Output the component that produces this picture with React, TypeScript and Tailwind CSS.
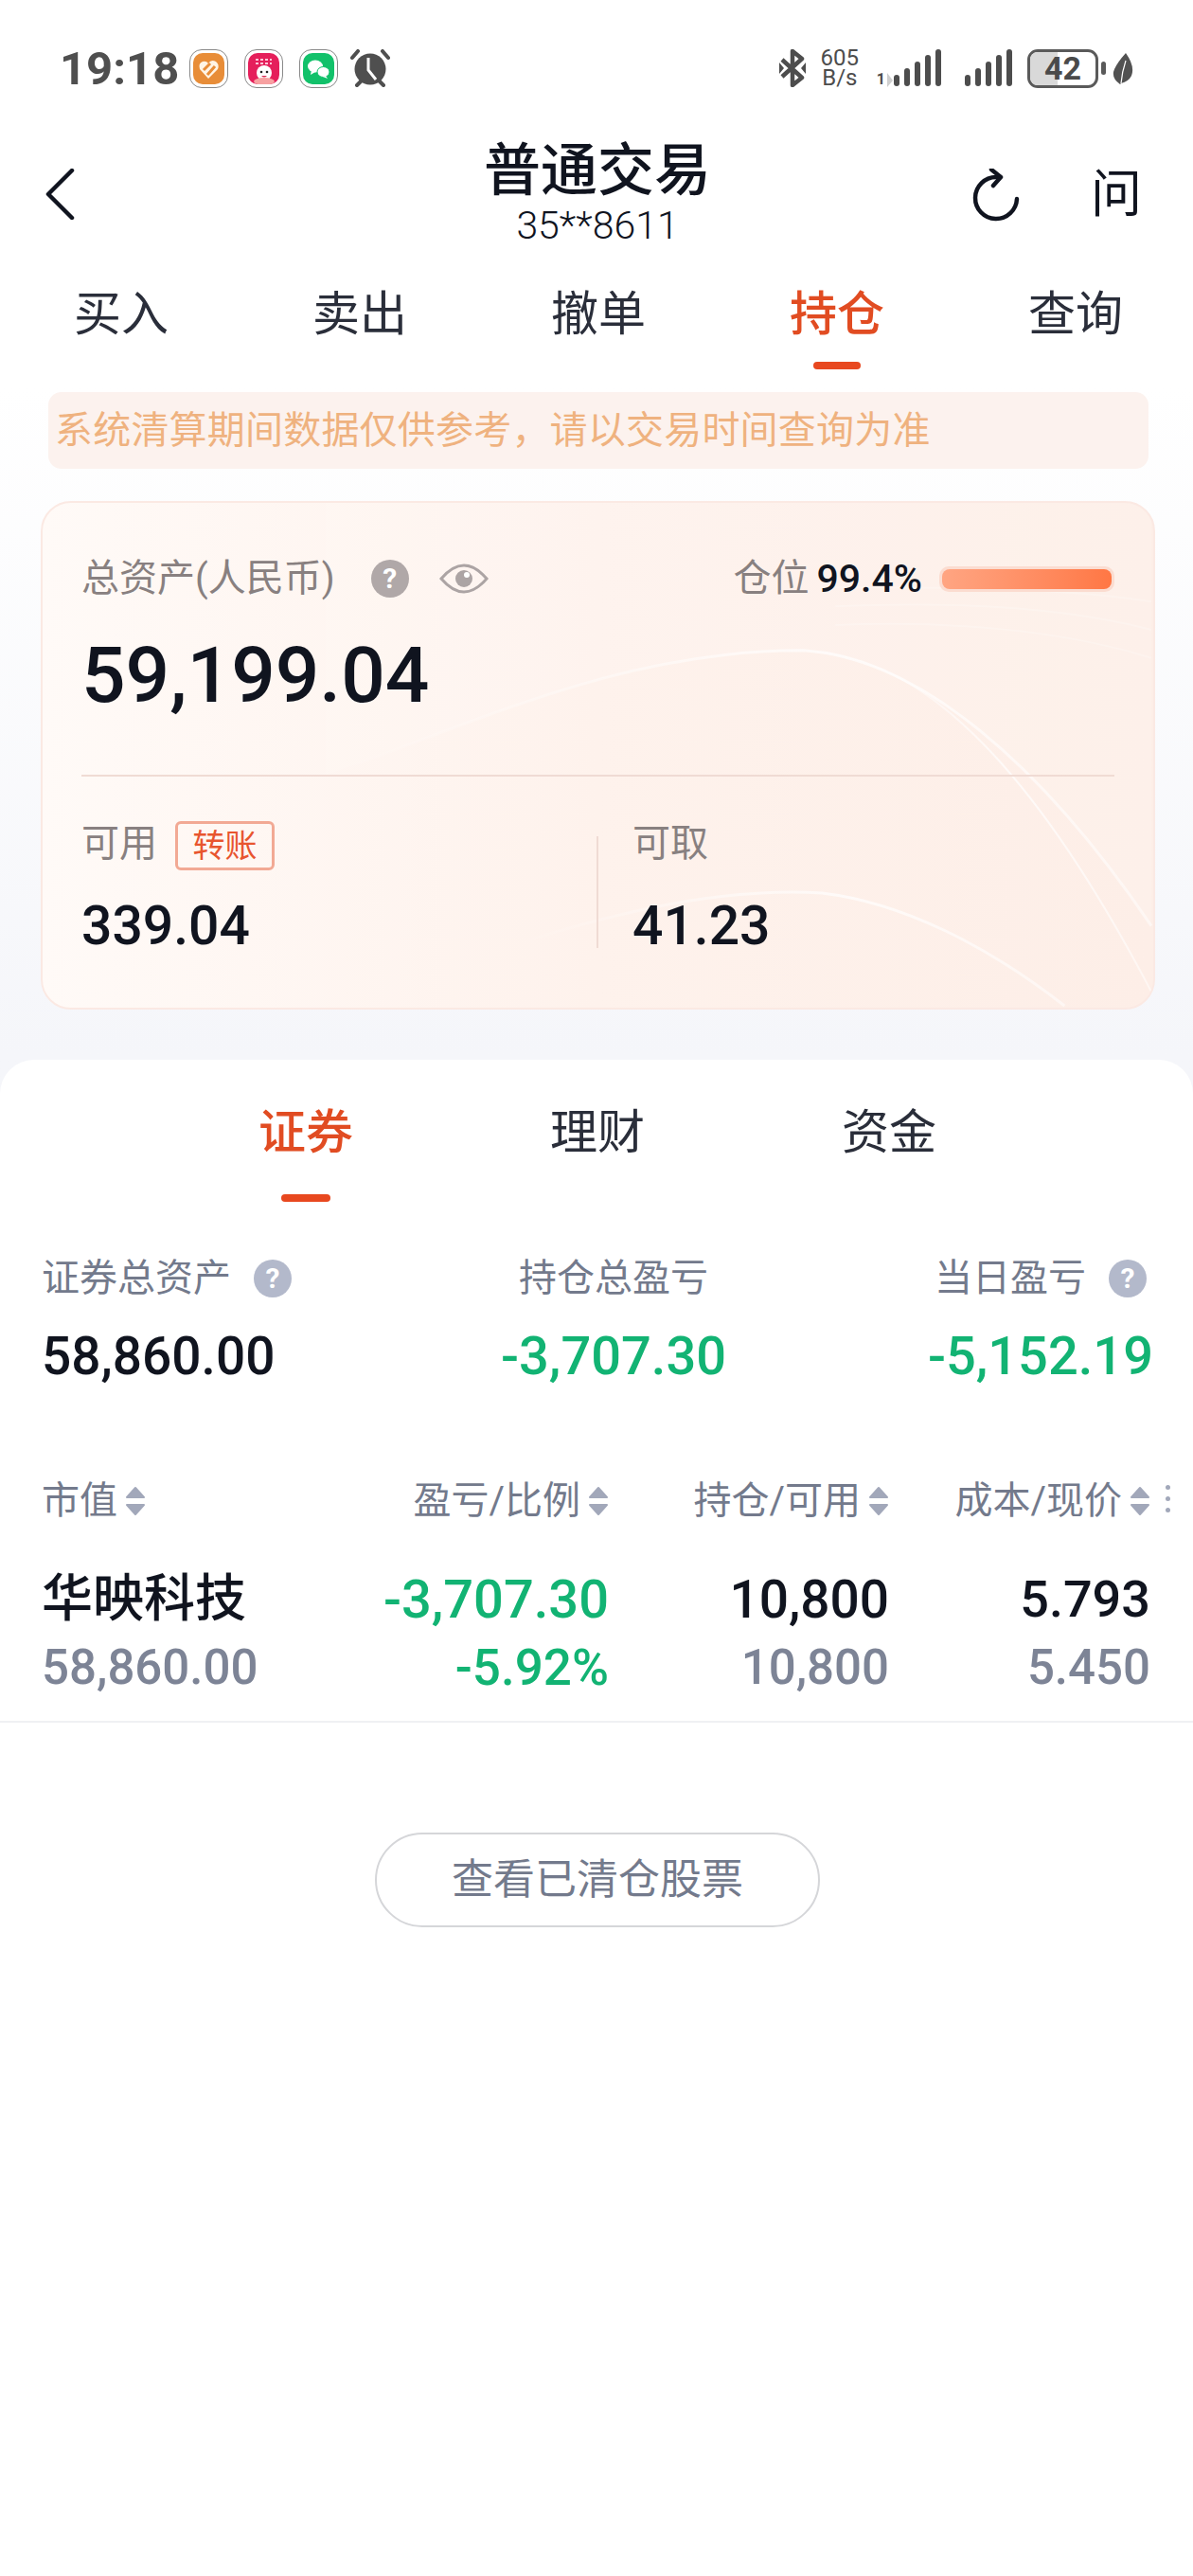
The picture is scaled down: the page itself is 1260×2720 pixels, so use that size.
import React from 'react';

const topTabs = ['买入', '卖出', '撤单', '持仓', '查询'];
const subTabs = ['证券', '理财', '资金'];

const HelpDot = ({ className }: { className: string }) => (
    <span className={`flex h-[40px] w-[40px] shrink-0 items-center justify-center rounded-full text-[30px] font-bold leading-none text-white ${className}`}>?</span>
);

const SortIcon = () => (
    <svg width="22" height="32" viewBox="0 0 22 32" className="shrink-0">
        <path d="M11 2 L20 12 H2 Z" fill="#a2a8ba" stroke="#a2a8ba" strokeWidth="2" strokeLinejoin="round" />
        <path d="M11 30 L20 20 H2 Z" fill="#a2a8ba" stroke="#a2a8ba" strokeWidth="2" strokeLinejoin="round" />
    </svg>
);

const Signal = () => (
    <svg width="50" height="40" viewBox="0 0 50 40">
        <rect x="0" y="27" width="6" height="12" rx="3" fill="#4d4d4d" />
        <rect x="11" y="20" width="6" height="19" rx="3" fill="#4d4d4d" />
        <rect x="22" y="13" width="6" height="26" rx="3" fill="#4d4d4d" />
        <rect x="33" y="6" width="6" height="33" rx="3" fill="#4d4d4d" />
        <rect x="44" y="0" width="6" height="39" rx="3" fill="#4d4d4d" />
    </svg>
);

const AppIcon = ({ children }: { children: React.ReactNode }) => (
    <div className="flex h-[41px] w-[41px] items-center justify-center rounded-[13px] border border-[#8a8a8a]">
        <div className="h-[33px] w-[33px] overflow-hidden rounded-[10px]">{children}</div>
    </div>
);

const StatusBar = () => (
    <div className="flex h-[144px] items-center pl-[63px] pr-[63px]">
        <span className="w-[137px] text-[49px] font-bold leading-none text-[#4f4f4f]">19:18</span>
        <div className="flex items-center gap-[17px]">
            <AppIcon>
                <svg viewBox="0 0 33 33" className="h-full w-full">
                    <rect width="33" height="33" fill="#e88d38" />
                    <path d="M16 27 L7 17 Q5 11 10 9 Q14 8 16 11 Q19 6 24 9 Q28 12 26 17 Z" fill="#fff4e4" />
                    <path d="M11 18 L18 11 M15 23 L23 14" stroke="#e88d38" strokeWidth="3" />
                </svg>
            </AppIcon>
            <AppIcon>
                <svg viewBox="0 0 33 33" className="h-full w-full">
                    <rect width="33" height="33" fill="#e51f5b" />
                    <path d="M8 7 H25 M8 11 H25" stroke="#ffc6d8" strokeWidth="2" strokeDasharray="3 2" />
                    <circle cx="17" cy="21" r="8" fill="#fff" />
                    <ellipse cx="17" cy="30" rx="11" ry="4" fill="#f7a1a1" />
                    <circle cx="14" cy="20" r="1.3" fill="#222" />
                    <circle cx="20" cy="20" r="1.3" fill="#222" />
                    <path d="M14 24 Q17 27 20 24 Z" fill="#d8264e" />
                </svg>
            </AppIcon>
            <AppIcon>
                <svg viewBox="0 0 33 33" className="h-full w-full">
                    <rect width="33" height="33" fill="#12c16a" />
                    <ellipse cx="13" cy="14" rx="8" ry="6.5" fill="#fff" />
                    <path d="M9 18 L8 23 L13 20 Z" fill="#fff" />
                    <ellipse cx="21.5" cy="20" rx="6.5" ry="5.5" fill="#fff" stroke="#12c16a" />
                    <path d="M24 24 L26 27 L21 25 Z" fill="#fff" />
                </svg>
            </AppIcon>
        </div>
        <svg width="42" height="40" viewBox="0 0 42 40" className="ml-[13px]">
            <circle cx="21" cy="21" r="16.5" fill="#4f4f4f" />
            <path d="M19 9 V22 L27 32" stroke="#fff" strokeWidth="3" fill="none" />
            <path d="M2 9 L8 2 M40 9 L34 2 M7 38 L11 34 M35 38 L31 34" stroke="#4f4f4f" strokeWidth="4" strokeLinecap="round" />
        </svg>

        <div className="ml-auto flex items-center">
            {/* bluetooth with the crossed arms of the reference */}
            <svg width="28" height="40" viewBox="0 0 28 40">
                <path d="M3 11 L24 30 L14 38 V2 L24 10 L3 29" fill="none" stroke="#4d4d4d" strokeWidth="4.5" strokeLinejoin="round" />
                <path d="M0 14 L5 20 L0 26 Z M28 14 L23 20 L28 26 Z" fill="#4d4d4d" />
            </svg>
            <div className="ml-[13px] flex w-[46px] flex-col items-center text-[24px] leading-[21px] text-[#4d4d4d]">
                <span>605</span>
                <span>B/s</span>
            </div>
            <div className="ml-[16px] flex items-end">
                <span className="mr-[1px] text-[16px] font-bold leading-[16px] text-[#4d4d4d]">1</span>
                <svg width="7" height="15" viewBox="0 0 7 15" className="mr-[1px]">
                    <path d="M1 0 V15 L7 8 Z" fill="#cfcfcf" />
                </svg>
                <Signal />
            </div>
            <div className="ml-[25px]">
                <Signal />
            </div>
            <div className="relative ml-[16px] flex h-[41px] w-[75px] items-center justify-center overflow-hidden rounded-[11px] border-[3px] border-[#5a5a5a]">
                <div className="absolute inset-y-0 left-0 w-[42%] bg-[#d9d9d9]" />
                <span className="relative text-[34px] font-bold leading-none text-[#4a4a4a]">42</span>
            </div>
            <div className="ml-[3px] h-[14px] w-[5px] rounded-full bg-[#5a5a5a]" />
            <svg width="22" height="33" viewBox="0 0 22 33" className="ml-[7px]">
                <path d="M14 0 Q24 14 20 24 Q17 30 9 32 L8 33 Q-2 26 2 17 Q5 10 14 0 Z" fill="#525252" />
                <path d="M14 8 Q10 20 9 32" stroke="#fff" strokeWidth="1.2" fill="none" />
            </svg>
        </div>
    </div>
);

const Header = () => (
    <div className="grid h-[110px] grid-cols-[1fr_auto_1fr] items-center">
        <div className="pl-[47px] pt-[6px]">
            <svg width="32" height="54" viewBox="0 0 32 54" className="block">
                <path d="M29 2 L4 27 L29 52" fill="none" stroke="#10141f" strokeWidth="4.5" strokeLinecap="round" strokeLinejoin="round" />
            </svg>
        </div>
        <div className="flex translate-x-[1px] flex-col items-center pt-[5px]">
            <span className="text-[60px] font-medium leading-[64px] text-[#10141f]">普通交易</span>
            <span className="mt-[4px] text-[41px] font-light leading-[42px] text-[#10141f]">35**8611</span>
        </div>
        <div className="flex items-center justify-end pr-[54px] pt-[8px]">
            <svg width="52" height="56" viewBox="0 0 52 56">
                <path d="M26 9 A22 22 0 1 0 48 32" fill="none" stroke="#10141f" strokeWidth="4.5" strokeLinecap="round" />
                <path d="M21 1 L31 9 L23 18" fill="none" stroke="#10141f" strokeWidth="4.5" strokeLinecap="round" strokeLinejoin="round" />
            </svg>
            <span className="ml-[74px] text-[54px] leading-none text-[#10141f]">问</span>
        </div>
    </div>
);

const AssetCard = () => (
    <div className="relative ml-[43px] mr-[40px] mt-[34px] h-[537px] overflow-hidden rounded-[32px] border-2 border-[#fbe9e3] bg-gradient-to-r from-[#fffaf7] via-[#fef2ec] to-[#fdeee7] px-[41px] pt-[58px]">
        {/* background waves */}
        <svg className="absolute inset-0 h-full w-full" viewBox="0 0 1177 537" preserveAspectRatio="none">
            <defs>
                <linearGradient id="waveLine" x1="0" y1="0" x2="1" y2="0">
                    <stop offset="0" stopColor="#ffffff" stopOpacity="0" />
                    <stop offset="0.6" stopColor="#ffffff" stopOpacity="0.7" />
                    <stop offset="1" stopColor="#ffffff" stopOpacity="0.5" />
                </linearGradient>
            </defs>
            <path d="M300 290 C480 225 620 157 806 157 C930 165 1060 280 1175 450 L1175 0 L300 0 Z" fill="#ffffff" fillOpacity="0.12" />
            <path d="M300 290 C480 225 620 157 806 157 C930 165 1060 280 1175 450" fill="none" stroke="url(#waveLine)" strokeWidth="3" />
            <path d="M806 157 C940 160 1060 300 1175 520" fill="none" stroke="url(#waveLine)" strokeWidth="2" />
            <path d="M500 470 C640 425 740 410 826 415 C910 425 1000 470 1083 535" fill="none" stroke="url(#waveLine)" strokeWidth="3" />
            <path d="M840 130 C960 125 1080 135 1175 165 M840 110 C960 105 1080 110 1175 135 M840 90 C960 90 1080 90 1175 105" fill="none" stroke="#ffffff" strokeOpacity="0.22" strokeWidth="2" />
        </svg>
        <div className="relative">
            <div className="flex h-[44px] items-center">
                <span className="text-[40px] leading-[44px] text-[#888080]">总资产(人民币)</span>
                <HelpDot className="ml-[38px] bg-[#b0a8a8]" />
                <svg width="52" height="32" viewBox="0 0 52 32" className="ml-[32px]">
                    <path d="M2 16 Q14 2 26 2 Q38 2 50 16 Q38 30 26 30 Q14 30 2 16 Z" fill="none" stroke="#aca4a4" strokeWidth="3" />
                    <circle cx="26" cy="16" r="9" fill="#aca4a4" />
                    <circle cx="29" cy="12" r="3" fill="#fff" />
                </svg>
                <span className="ml-auto text-[40px] leading-[44px] text-[#888080]">仓位</span>
                <span className="ml-[8px] text-[41px] font-medium leading-[44px] text-[#10141f]">99.4%</span>
                <div className="ml-[18px] flex h-[27px] w-[185px] items-center rounded-[10px] bg-[#fbdcd0] px-[3px]">
                    <div className="h-[21px] w-full rounded-[8px] bg-gradient-to-r from-[#ffa582] to-[#ff7744]" />
                </div>
            </div>
            <div className="mt-[35px] text-[82px] font-medium leading-[90px] text-[#10141f]">59,199.04</div>
            <div className="mt-[60px] h-[2px] w-full bg-[#f0dbd4]" />
            <div className="flex items-start">
                <div className="w-[544px] pt-[47px]">
                    <div className="flex h-[52px] items-center">
                        <span className="pb-[5px] text-[40px] leading-[44px] text-[#888080]">可用</span>
                        <span className="ml-[19px] flex h-[52px] w-[105px] items-center justify-center rounded-[6px] border-[3px] border-[#f2a994] text-[34px] leading-none text-[#e8552f]">转账</span>
                    </div>
                    <div className="mt-[24px] text-[57px] font-medium leading-[70px] text-[#10141f]">339.04</div>
                </div>
                <div className="mt-[63px] h-[118px] w-[2px] bg-[#f0dbd4]" />
                <div className="pl-[36px] pt-[47px]">
                    <div className="flex h-[52px] items-center">
                        <span className="pb-[5px] text-[40px] leading-[44px] text-[#888080]">可取</span>
                    </div>
                    <div className="mt-[24px] text-[57px] font-medium leading-[70px] text-[#10141f]">41.23</div>
                </div>
            </div>
        </div>
    </div>
);

const StatsRow = () => (
    <div className="mt-[59px] grid grid-cols-[485px_238px_1fr] pl-[44px] pr-[42px]">
        <div>
            <div className="flex h-[44px] items-center">
                <span className="text-[40px] leading-[44px] text-[#737a8c]">证券总资产</span>
                <HelpDot className="ml-[24px] bg-[#b3b9cb]" />
            </div>
            <div className="mt-[28px] text-[55px] font-medium leading-[64px] text-[#10141f]">58,860.00</div>
        </div>
        <div className="text-center">
            <div className="h-[44px] text-[40px] leading-[44px] text-[#737a8c]">持仓总盈亏</div>
            <div className="mt-[28px] whitespace-nowrap text-[56px] font-medium leading-[64px] text-[#12b373]">-3,707.30</div>
        </div>
        <div className="text-right">
            <div className="flex h-[44px] items-center justify-end pr-[7px]">
                <span className="text-[40px] leading-[44px] text-[#737a8c]">当日盈亏</span>
                <HelpDot className="ml-[24px] bg-[#b3b9cb]" />
            </div>
            <div className="mt-[28px] text-[56px] font-medium leading-[64px] text-[#12b373]">-5,152.19</div>
        </div>
    </div>
);

const HeadCell = ({ label, end }: { label: string; end?: boolean }) => (
    <div className={`flex h-[44px] items-center gap-[8px] ${end ? 'justify-end' : ''}`}>
        <span className="text-[40px] leading-[44px] text-[#737a8c]">{label}</span>
        <SortIcon />
    </div>
);

const HoldingsTable = () => (
    <div>
        <div className="relative mt-[99px] grid grid-cols-[201px_398px_296px_276px] pl-[44px]">
            <HeadCell label="市值" />
            <HeadCell label="盈亏/比例" end />
            <HeadCell label="持仓/可用" end />
            <HeadCell label="成本/现价" end />
            <div className="absolute right-[24px] top-[5px] flex flex-col gap-[7px]">
                <div className="h-[5px] w-[5px] rounded-full bg-[#a2a8ba]" />
                <div className="h-[5px] w-[5px] rounded-full bg-[#a2a8ba]" />
                <div className="h-[5px] w-[5px] rounded-full bg-[#a2a8ba]" />
            </div>
        </div>
        <div className="mt-[52px] grid grid-cols-[201px_398px_296px_276px] pl-[44px] pr-[45px]">
            <div>
                <div className="whitespace-nowrap text-[54px] font-medium leading-[60px] text-[#10141f]">华映科技</div>
                <div className="mt-[14px] whitespace-nowrap text-[51px] font-medium leading-[56px] text-[#7d8496]">58,860.00</div>
            </div>
            <div className="text-right">
                <div className="text-[56px] font-medium leading-[60px] text-[#12b373]">-3,707.30</div>
                <div className="mt-[14px] text-[53px] font-medium leading-[56px] text-[#12b373]">-5.92%</div>
            </div>
            <div className="text-right">
                <div className="text-[55px] font-medium leading-[60px] text-[#10141f]">10,800</div>
                <div className="mt-[14px] text-[51px] font-medium leading-[56px] text-[#7d8496]">10,800</div>
            </div>
            <div className="text-right">
                <div className="text-[54px] font-medium leading-[60px] text-[#10141f]">5.793</div>
                <div className="mt-[14px] text-[51px] font-medium leading-[56px] text-[#7d8496]">5.450</div>
            </div>
        </div>
        <div className="mt-[28px] h-[2px] bg-[#eff0f3]" />
    </div>
);

const App = () => (
    <div className="flex h-[2720px] w-[1260px] flex-col overflow-hidden bg-gradient-to-b from-white from-[15%] to-[#f5f6fa] to-[41%] font-['Roboto','Noto_Sans_CJK_SC',sans-serif]">
        <StatusBar />
        <Header />

        <div className="ml-[2px] grid w-[1260px] shrink-0 grid-cols-5 pt-[48px]">
            {topTabs.map(tab => (
                <div key={tab} className="flex flex-col items-center">
                    <span className={`text-[50px] leading-[60px] ${tab === '持仓' ? 'font-medium text-[#e14c22]' : 'text-[#2a2e3a]'}`}>{tab}</span>
                    <div className={`mt-[20px] h-[8px] w-[50px] rounded-full ${tab === '持仓' ? 'bg-[#e8481f]' : 'bg-transparent'}`} />
                </div>
            ))}
        </div>

        <div className="ml-[51px] mr-[47px] mt-[24px] flex h-[81px] items-center rounded-[14px] bg-[#fcf2ee] pl-[7px] text-[40px] leading-none tracking-[0.2px] text-[#efb27f]">
            系统清算期间数据仅供参考，请以交易时间查询为准
        </div>

        <AssetCard />

        <div className="mt-[53px] flex-1 rounded-t-[36px] bg-white pt-[47px]">
            <div className="mx-auto grid w-[924px] translate-x-[1px] grid-cols-3">
                {subTabs.map(tab => (
                    <div key={tab} className="flex flex-col items-center">
                        <span className={`text-[50px] leading-[60px] ${tab === '证券' ? 'font-medium text-[#e14c22]' : 'text-[#2a2e3a]'}`}>{tab}</span>
                        <div className={`mt-[35px] h-[8px] w-[52px] rounded-full ${tab === '证券' ? 'bg-[#e8481f]' : 'bg-transparent'}`} />
                    </div>
                ))}
            </div>

            <StatsRow />
            <HoldingsTable />

            <div className="ml-[396px] mt-[116px] flex h-[100px] w-[470px] items-center justify-center rounded-full border-2 border-[#d5d6d9] text-[44px] leading-none text-[#737a8c]">
                查看已清仓股票
            </div>
        </div>
    </div>
);

export default App;
